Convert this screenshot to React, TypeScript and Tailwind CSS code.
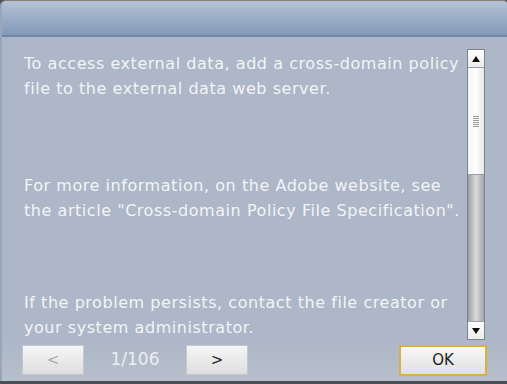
import React from "react";

const paragraphs = [
    "To access external data, add a cross-domain policy file to the external data web server.",
    "For more information, on the Adobe website, see the article \"Cross-domain Policy File Specification\".",
    "If the problem persists, contact the file creator or your system administrator.",
];

function Arrow({ up }: { up?: boolean }) {
    return (
        <svg width="8" height="6" viewBox="0 0 8 6" className="block">
            {up ? <path d="M4 0 L8 6 L0 6 Z" fill="#111" /> : <path d="M0 0 L8 0 L4 6 Z" fill="#111" />}
        </svg>
    );
}

function Scrollbar() {
    return (
        <div className="w-[18px] h-[291px] flex flex-col border border-[#7d838c] bg-gradient-to-r from-[#9a9ea5] via-[#dcdcdc] to-[#9fa3a9]">
            <div className="h-[18px] shrink-0 bg-gradient-to-b from-white to-[#ececec] border-b border-[#9aa0a8] flex items-center justify-center">
                <Arrow up />
            </div>
            <div className="h-[107px] shrink-0 bg-gradient-to-r from-[#f4f4f4] via-white to-[#e6e6e6] border-b border-[#9aa0a8] flex items-center justify-center">
                <div className="flex flex-col gap-[1px]">
                    {[0, 1, 2, 3, 4, 5].map(i => (
                        <div key={i} className="w-[6px] h-[1px] bg-[#9a9a9a]" />
                    ))}
                </div>
            </div>
            <div className="flex-1" />
            <div className="h-[18px] shrink-0 bg-gradient-to-b from-white to-[#ececec] border-t border-[#9aa0a8] flex items-center justify-center">
                <Arrow />
            </div>
        </div>
    );
}

export default function App() {
    return (
        <div className="w-[507px] h-[384px] bg-[#4a4f57] overflow-hidden" style={{ fontFamily: "'DejaVu Sans', Verdana, sans-serif" }}>
            <div className="h-[381px] flex flex-col rounded-tl-[6px] rounded-tr-[4px] overflow-hidden border-t border-[#8a7f74] bg-[#adb7c7] border-l-2 border-l-[#9aa6b8]">
                <div className="h-[36px] shrink-0 bg-gradient-to-b from-[#b5c3d7] to-[#8299b8] border-b-2 border-[#7088a8]" />

                <div className="flex-1 flex pt-[12px]">
                    <div className="flex-1 pl-[22px] pr-[4px] pt-[2px] text-[16px] leading-[25px] text-[#f2f4f7] tracking-[0.55px]">
                        <p>{paragraphs[0]}</p>
                        <p className="mt-[72px]">{paragraphs[1]}</p>
                        <p className="mt-[67px]">{paragraphs[2]}</p>
                    </div>
                    <div className="pr-[22px]">
                        <Scrollbar />
                    </div>
                </div>

                <div className="h-[40px] shrink-0 flex items-center pl-[20px] pr-[20px] pb-[2px] bg-gradient-to-b from-[#adb7c7] to-[#b7bfcb]">
                    <button className="w-[62px] h-[30px] bg-gradient-to-b from-[#f6f6f6] to-[#dedede] border border-[#c4c8ce] text-[#a7adb6] text-[15px] flex items-center justify-center">
                        &lt;
                    </button>
                    <div className="w-[102px] text-center text-[17px] text-[#eceff3]">1/106</div>
                    <button className="w-[62px] h-[30px] bg-gradient-to-b from-[#f6f6f6] to-[#dedede] border border-[#c4c8ce] text-[#222] text-[15px] flex items-center justify-center">
                        &gt;
                    </button>
                    <div className="flex-1" />
                    <button className="w-[88px] h-[31px] bg-gradient-to-b from-[#f8f8f8] to-[#e0e0e0] border-2 border-[#d8b23a] text-[#222] text-[15px] flex items-center justify-center">
                        OK
                    </button>
                </div>
            </div>
        </div>
    );
}
